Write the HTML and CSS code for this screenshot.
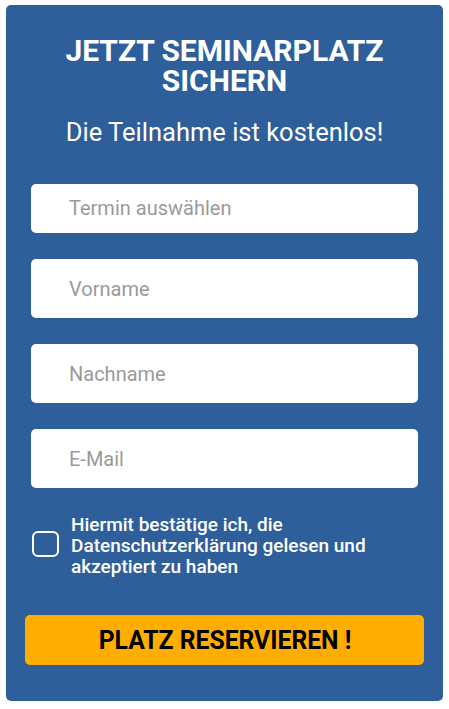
FILE: index.html
```html
<!DOCTYPE html>
<html lang="de">
<head>
    <meta charset="UTF-8">
    <meta name="viewport" content="width=device-width, initial-scale=1.0">
    <title>Seminarplatz sichern</title>
    <link rel="stylesheet" href="styles.css">
</head>
<body>

    <form class="signup">
        <h1 class="signup-title">JETZT SEMINARPLATZ SICHERN</h1>
        <p class="signup-sub">Die Teilnahme ist kostenlos!</p>

        <div class="field field-select">Termin auswählen</div>
        <input class="field" type="text" placeholder="Vorname">
        <input class="field" type="text" placeholder="Nachname">
        <input class="field" type="email" placeholder="E-Mail">

        <label class="consent">
            <span class="consent-box"></span>
            <span class="consent-text">Hiermit bestätige ich, die Datenschutzerklärung gelesen und akzeptiert zu haben</span>
        </label>

        <button class="submit" type="button"><span>PLATZ RESERVIEREN !</span></button>
    </form>

</body>
</html>
```

FILE: styles.css
```css
body {
    margin: 0;
    padding: 5px 6px;
    background-color: #fff;
    font-family: Roboto, "Liberation Sans", sans-serif;
}

.signup {
    width: 437px;
    height: 696px;
    box-sizing: border-box;
    background-color: #2E5F9B; /* blue card */
    border-radius: 5px;
    padding: 31px 19px 0;
    display: flex;
    flex-direction: column;
}

.signup-title {
    margin: 0 20px;
    color: #fff;
    font-size: 30px;
    line-height: 30px;
    font-weight: 700;
    text-align: center;
}

.signup-sub {
    margin: 21px 0 0;
    color: #fff;
    font-size: 25.5px;
    line-height: 30px;
    text-align: center;
}

.field {
    display: block;
    margin: 26px 6px 0;
    height: 59px;
    box-sizing: border-box;
    border: none;
    border-radius: 5px;
    background-color: #fff;
    padding: 0 0 0 38px;
    font-family: inherit;
    font-size: 20px;
    color: #333;
    outline: none;
}

.field::placeholder {
    color: #9a9a9a;
}

.field-select {
    margin-top: 37px;
    height: 49px;
    line-height: 49px;
    color: #9a9a9a;
}

.consent {
    display: flex;
    align-items: center;
    gap: 12px;
    margin: 26px 6px 0 7px;
    color: #fff;
    font-size: 19px;
    line-height: 21px;
    font-weight: 500;
}

.consent-box {
    flex: none;
    width: 27px;
    height: 26px;
    margin-top: -4px;
    box-sizing: border-box;
    border: 2px solid #fff;
    border-radius: 6px;
}

.consent-text {
    width: 310px;
}

.submit {
    margin-top: 38px;
    height: 50px;
    border: none;
    border-radius: 5px;
    background-color: #FFAE00; /* orange */
    color: #000;
    font-family: inherit;
    font-size: 26px;
    font-weight: 700;
    cursor: pointer;
}

.submit span {
    display: inline-block;
    transform: scaleX(0.95);
}
```
